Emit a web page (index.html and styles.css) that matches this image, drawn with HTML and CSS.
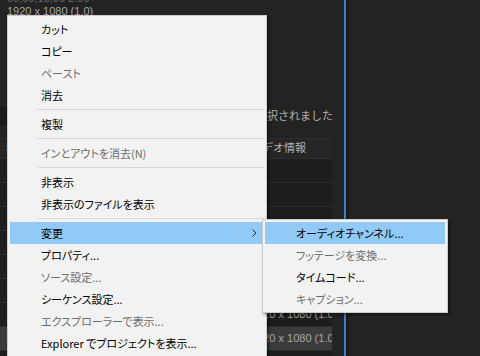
FILE: index.html
```html
<!DOCTYPE html>
<html>
   <head>
      <title>コンテキストメニュー</title>
      <link rel="stylesheet" href="styles.css">
   </head>
   <body>
   <div class="screen">
      <div class="panel">
         <div class="meta">
            <div class="dim">00;00;10;00 2:00</div>
            <div>1920 x 1080 (1.0)</div>
            <div>0, 48000 Hz - ステレオ</div>
            <div>-  -</div>
         </div>
         <div class="status">1 個のアイテムが選択されました</div>
         <div class="gap"></div>
         <div class="table">
            <div class="row head"><span>名前</span><span>ビデオ情報</span></div>
            <div class="row"><span></span><span></span></div>
            <div class="row"><span></span><span></span></div>
            <div class="row"><span></span><span></span></div>
            <div class="row"><span></span><span></span></div>
            <div class="row"><span></span><span></span></div>
            <div class="row"><span></span><span></span></div>
            <div class="row"><span>シーケンス 01</span><span>1920 x 1080 (1.0)</span></div>
            <div class="row sel"><span>シーケンス 02</span><span>1920 x 1080 (1.0)</span></div>
            <div class="row"><span></span><span></span></div>
         </div>
      </div>
      <div class="divider"></div>
      <div class="side"></div>

      <ul class="menu main">
         <li>カット</li>
         <li>コピー</li>
         <li class="off">ペースト</li>
         <li>消去</li>
         <li class="sep"></li>
         <li>複製</li>
         <li class="sep"></li>
         <li class="off">インとアウトを消去(N)</li>
         <li class="sep"></li>
         <li>非表示</li>
         <li>非表示のファイルを表示</li>
         <li class="sep"></li>
         <li class="hot more">変更
            <svg width="5" height="8" viewBox="0 0 5 8"><path d="M0.5 0.5 L4 4 L0.5 7.5" fill="none" stroke="#222" stroke-width="1"/></svg>
         </li>
         <li>プロパティ...</li>
         <li class="off">ソース設定...</li>
         <li>シーケンス設定...</li>
         <li class="off">エクスプローラーで表示...</li>
         <li>Explorer でプロジェクトを表示...</li>
      </ul>

      <ul class="menu sub">
         <li class="hot">オーディオチャンネル...</li>
         <li class="off">フッテージを変換...</li>
         <li>タイムコード...</li>
         <li class="off">キャプション...</li>
      </ul>
   </div>
   </body>
</html>
```

FILE: styles.css
```css
body { margin:0; background:#232323; }
.screen { position:relative; display:flex; width:480px; height:356px; overflow:hidden;
          font-family:"Liberation Sans", "Noto Sans CJK JP", sans-serif; }

.panel { width:344px; flex-shrink:0; }
.meta { margin-top:-8px; padding-left:7px; font-size:11px; line-height:13px; color:#a6a6a6; }
.meta .dim { color:#6a6a6a; }
.status { margin-top:63px; height:18px; line-height:18px; padding-right:11px; text-align:right;
          font-size:11px; color:#b4b4b4; background:linear-gradient(to right, #1b1b1b 8px, transparent 8px); }
.gap { height:13px; }

.table { width:332px; }
.row { display:grid; grid-template-columns:251px 81px; height:23px; line-height:23px;
       background:#1d1d1d; border-bottom:1px solid #2d2d2d; font-size:11px; color:#a8a8a8;
       white-space:nowrap; overflow:hidden; }
.row span { overflow:hidden; }
.row span:first-child { padding-left:6px; }
.row.head { height:19px; line-height:19px; background:#262626; border-top:1px solid #2d2d2d; color:#b4b4b4; }
.row.sel { background:#3b3b3b; }

.divider { width:2px; flex-shrink:0; background:#3f7fcb; border-right:3px solid #1a1a1a; }
.side { flex:1; background:#242424; }

.menu { position:absolute; margin:0; padding:2px; list-style:none; background:#f2f2f2;
        border:1px solid #cccccc; box-shadow:2px 2px 3px rgba(0,0,0,0.45);
        font-family:"Noto Sans CJK JP", sans-serif; font-size:11px; font-feature-settings:"palt"; color:#000; }
.menu li { height:22px; line-height:22px; padding-left:31px; white-space:nowrap; }
.menu li.off { color:#6d6d6d; }
.menu li.hot { background:#91c9f7; }
.menu li.sep { height:7px; padding:0; margin-left:28px; position:relative; }
.menu li.sep::after { content:""; position:absolute; left:0; right:0; top:3px; border-top:1px solid #d7d7d7; }
.menu li.more { display:flex; justify-content:space-between; align-items:center; padding-right:7px; }

.main { left:7px; top:15px; width:254px; }
.sub { left:262px; top:219px; width:180px; }
```
